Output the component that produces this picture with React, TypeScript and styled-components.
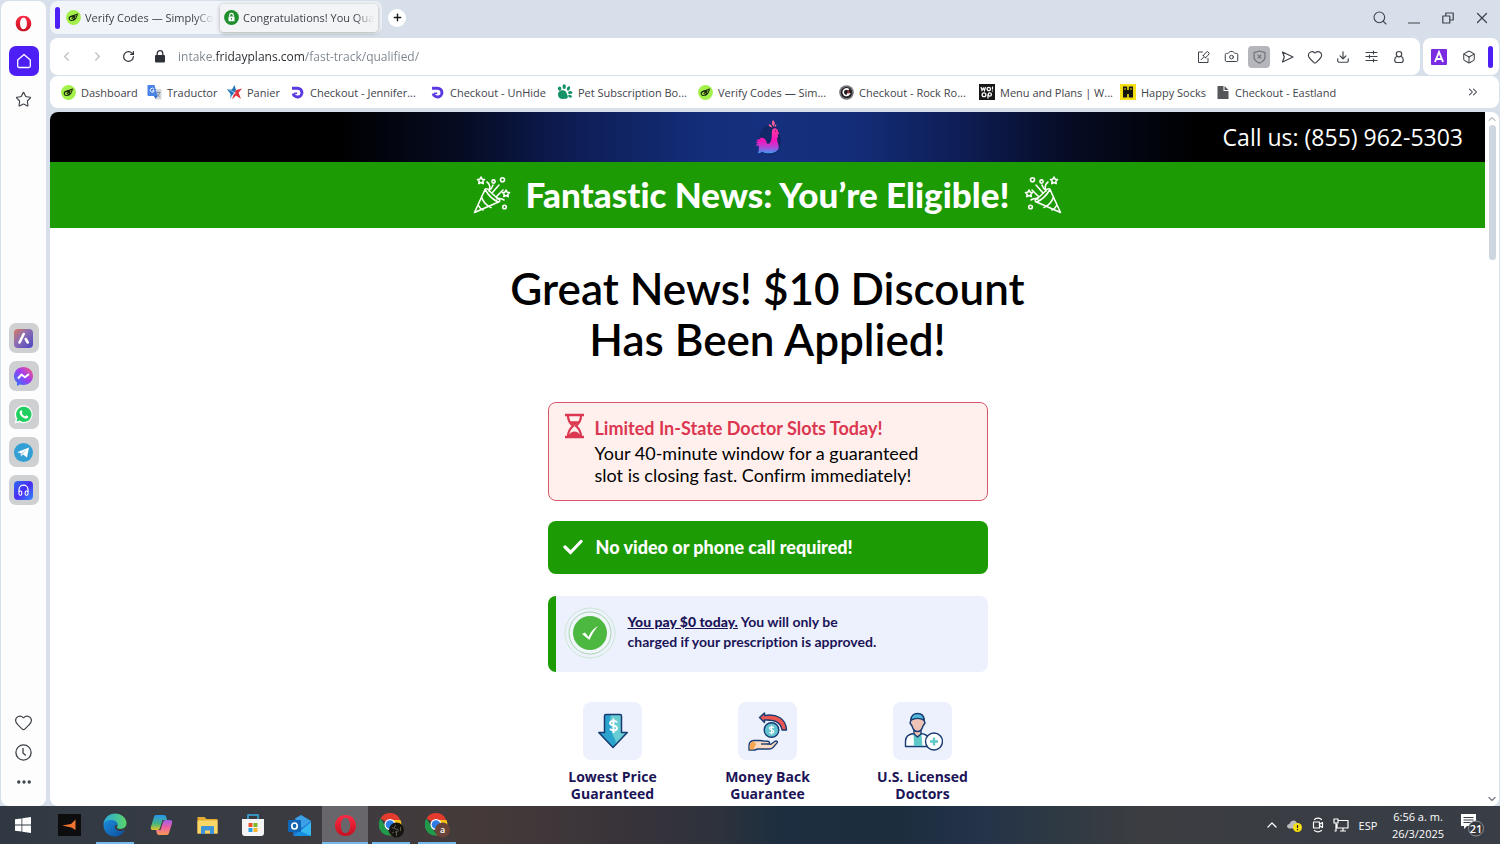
import React from "react";
import styled, { createGlobalStyle } from "styled-components";
import {
  Search, X, Heart, Download, Box, ChevronLeft, ChevronRight, ChevronsRight,
  RotateCw, Camera, Star, Ellipsis, Plus, ChevronUp, ChevronDown,
} from "lucide-react";

const ui = `"Open Sans", "Noto Sans", sans-serif`;
const brand = `Lato, "Open Sans", sans-serif`;

const GlobalStyle = createGlobalStyle`
  *, *::before, *::after { box-sizing: border-box; }
  body { margin: 0; background: #d7e0ea; font-family: ${ui}; }
  button { border: 0; padding: 0; background: none; font: inherit; color: inherit; }
  svg { display: block; flex: none; }
`;

const Desktop = styled.div`
  display: flex;
  flex-direction: column;
  height: 100vh;
  min-height: 480px;
  overflow: hidden;
  color: #3d4249;
`;
const Browser = styled.div`
  flex: 1;
  min-height: 0;
  display: flex;
  gap: 4px;
  padding: 1px 1px 0;
`;

/* Sidebar */
const Sidebar = styled.nav`
  width: 45px;
  flex: none;
  display: flex;
  flex-direction: column;
  align-items: center;
  padding: 7px 0 9px;
  background: #fdfdfe;
  border-radius: 8px;
`;
const SideButton = styled.button<{ $home?: boolean }>`
  display: flex;
  align-items: center;
  justify-content: center;
  width: 30px;
  height: 30px;
  border-radius: 7px;
  margin-bottom: 8px;
  color: ${(p) => (p.$home ? "#fff" : "#3d4249")};
  background: ${(p) => (p.$home ? "#4d1ff5" : "none")};
`;
const AppList = styled.div`
  display: flex;
  flex-direction: column;
  gap: 8px;
  margin-top: 201px;
`;
const AppButton = styled.button`
  display: flex;
  align-items: center;
  justify-content: center;
  width: 30px;
  height: 30px;
  border-radius: 7px;
  background: #cfd0d2;
`;
const SideFooter = styled.div`
  display: flex;
  flex-direction: column;
  margin-top: auto;
`;
const FooterButton = styled.button`
  display: flex;
  align-items: center;
  justify-content: center;
  width: 30px;
  height: 30px;
`;

/* Chrome */
const Main = styled.div`
  flex: 1;
  min-width: 0;
  display: flex;
  flex-direction: column;
`;
const TabBar = styled.div`
  display: flex;
  align-items: center;
  height: 33px;
  margin-bottom: 4px;
`;
const TabGroup = styled.div`
  display: flex;
  align-items: center;
  width: 332px;
  height: 33px;
  padding: 0 4px 0 5px;
  background: #f1f4f8;
  border-radius: 8px;
`;
const Marker = styled.span`
  width: 5px;
  height: 22px;
  border-radius: 3px;
  background: #4d1ff5;
`;
const Tab = styled.button<{ $active?: boolean }>`
  display: flex;
  align-items: center;
  gap: 4px;
  height: 28px;
  flex: ${(p) => (p.$active ? "0 0 158px" : 1)};
  min-width: 0;
  margin-left: 2px;
  padding: 0 4px;
  border-radius: 4px;
  font-size: 11px;
  background: ${(p) => (p.$active ? "#f3f4f6" : "none")};
  box-shadow: ${(p) => (p.$active ? "0 1px 4px rgba(0,0,0,.3)" : "none")};
`;
const TabTitle = styled.span`
  flex: 1;
  overflow: hidden;
  white-space: nowrap;
  text-align: left;
  mask-image: linear-gradient(90deg, #000 85%, transparent);
`;
const NewTab = styled.button`
  display: flex;
  align-items: center;
  justify-content: center;
  width: 18px;
  height: 18px;
  margin-left: 6px;
  border-radius: 50%;
  background: #fff;
  color: #16181b;
`;
const WindowControls = styled.div`
  display: flex;
  margin-left: auto;
`;
const WindowButton = styled.button`
  display: flex;
  align-items: center;
  justify-content: center;
  width: 34px;
  height: 33px;
`;
const AddressRow = styled.div`
  display: flex;
  gap: 3px;
  height: 37px;
  margin-bottom: 1px;
`;
const Panel = styled.div<{ $grow?: boolean }>`
  display: flex;
  align-items: center;
  flex: ${(p) => (p.$grow ? 1 : "none")};
  min-width: 0;
  padding: ${(p) => (p.$grow ? "0 7px 0 1px" : "0 6px 0 1px")};
  background: #fff;
  border-radius: 8px;
`;
const NavButton = styled.button<{ $faded?: boolean }>`
  display: flex;
  align-items: center;
  justify-content: center;
  width: 31px;
  height: 30px;
  color: ${(p) => (p.$faded ? "#b9bcc1" : "#2e3238")};
`;
const UrlField = styled.input`
  flex: 1;
  min-width: 0;
  height: 30px;
  margin-left: 3px;
  padding: 0;
  border: 0;
  outline: 0;
  font: 12px/30px ${ui};
  color: transparent;
  background: linear-gradient(90deg, #7b838c 0 37px, #24282d 37px 127px, #7b838c 127px);
  background-clip: text;
`;
const ToolButton = styled.button<{ $on?: boolean }>`
  display: flex;
  align-items: center;
  justify-content: center;
  width: 22px;
  height: 22px;
  margin: 0 3px;
  border-radius: 4px;
  background: ${(p) => (p.$on ? "#b4b6bb" : "none")};
`;
const ExtButton = styled.button`
  display: flex;
  align-items: center;
  justify-content: center;
  width: 30px;
  height: 30px;
`;
const ExtMarker = styled(Marker)`
  margin-left: 4px;
`;
const Bookmarks = styled.nav`
  display: flex;
  align-items: center;
  height: 32px;
  margin-bottom: 4px;
  padding: 0 19px 0 11px;
  background: #fff;
  border-radius: 8px;
`;
const Bookmark = styled.a<{ $w: number }>`
  display: flex;
  align-items: center;
  gap: 5px;
  width: ${(p) => p.$w}px;
  flex: none;
  font-size: 11px;
  color: #3f444a;
  text-decoration: none;
  white-space: nowrap;
`;
const More = styled.button`
  margin-left: auto;
`;

/* Page */
const Viewport = styled.div`
  flex: 1;
  min-height: 0;
  display: flex;
  border-radius: 8px;
  overflow: hidden;
  background: #fff;
`;
const Page = styled.main`
  flex: 1;
  min-width: 0;
  overflow: hidden;
  color: #000;
  font-family: ${brand};
  font-variant-ligatures: none;
`;
const ScrollTrack = styled.div`
  display: flex;
  flex-direction: column;
  align-items: center;
  width: 14px;
  padding: 1px 0;
  color: #85898f;
`;
const ScrollThumb = styled.div`
  width: 7px;
  height: 135px;
  border-radius: 4px;
  background: #ced6e0;
  margin-bottom: auto;
`;
const Hero = styled.header`
  display: grid;
  grid-template-columns: 1fr auto 1fr;
  align-items: center;
  height: 50px;
  padding: 0 22px;
  background: linear-gradient(90deg, #000 20%, #060c24 29%, #0d1c52 36%, #142d79 45%, #15307e 50%, #142d79 56%, #0d1c52 64%, #060c24 71%, #000 80%);
`;
const Phone = styled.a`
  justify-self: end;
  font: 23px/32px ${ui};
  color: #fff;
  text-decoration: none;
`;
const Banner = styled.div`
  display: flex;
  align-items: center;
  justify-content: center;
  gap: 15px;
  height: 66px;
  background: #1c9b04;
  color: #fff;
`;
const BannerTitle = styled.h2`
  margin: 0;
  padding-bottom: 3px;
  font-size: 35px;
  line-height: 48px;
  font-weight: 900;
`;
const Headline = styled.h1`
  margin: 35px 0 37px;
  font-size: 44px;
  line-height: 51px;
  font-weight: 600;
  text-align: center;
`;
const Stack = styled.div`
  width: 440px;
  max-width: 100%;
  margin: 0 auto;
  display: flex;
  flex-direction: column;
`;
const Alert = styled.section`
  display: flex;
  gap: 10px;
  height: 99px;
  padding: 10px 15px;
  border: 1px solid #d8566c;
  border-radius: 8px;
  background: #fff0ee;
`;
const AlertTitle = styled.h3`
  margin: 3px 0 2px;
  font-size: 18px;
  line-height: 24px;
  font-weight: 700;
  color: #dc3750;
`;
const AlertText = styled.p`
  margin: 0;
  font-size: 18px;
  line-height: 22px;
`;
const Required = styled.section`
  display: flex;
  align-items: center;
  gap: 13px;
  height: 53px;
  margin-top: 20px;
  padding: 0 15px 2px;
  border-radius: 8px;
  background: #1c9b04;
  color: #fff;
  font-size: 18px;
  font-weight: 900;
`;
const PayNote = styled.section`
  display: flex;
  align-items: center;
  gap: 12px;
  height: 76px;
  margin-top: 22px;
  padding: 0 8px 2px;
  border-left: 8px solid #1c9b04;
  border-radius: 8px;
  background: #edf1fe;
`;
const PayText = styled.p`
  margin: 0;
  padding-bottom: 2px;
  font-size: 14px;
  line-height: 20px;
  font-weight: 700;
  color: #1b1457;
`;
const PayStrong = styled.strong`
  font-weight: 900;
  text-decoration: underline;
`;
const Features = styled.ul`
  display: flex;
  justify-content: center;
  list-style: none;
  margin: 30px 0 0;
  padding: 0;
`;
const Feature = styled.li`
  display: flex;
  flex-direction: column;
  align-items: center;
  flex: none;
  width: 155px;
  text-align: center;
  font: 700 14px/17px ${ui};
  color: #1b1457;
`;
const FeatureTile = styled.div`
  display: flex;
  align-items: center;
  justify-content: center;
  width: 59px;
  height: 58px;
  margin-bottom: 8px;
  border-radius: 8px;
  background: #edf1fe;
`;

/* Taskbar */
const Taskbar = styled.footer`
  display: flex;
  flex: none;
  height: 38px;
  background: linear-gradient(90deg, #303943 0%, #363b43 12%, #3c3b40 22%, #453a39 32%, #38333a 42%, #2d323c 48%, #1c2e3f 52%, #1c2e3e 60%, #24324a 65%, #2d3943 70%, #3b3d41 76%, #383d46 100%);
  color: #fff;
`;
const TaskButton = styled.button<{ $open?: boolean; $active?: boolean }>`
  display: flex;
  align-items: center;
  justify-content: center;
  width: 46px;
  height: 38px;
  background:
    linear-gradient(#76b9ed, #76b9ed) center bottom / ${(p) => (p.$active ? "46px" : p.$open ? "38px" : "0")} 2px no-repeat,
    ${(p) => (p.$active ? "#68666b" : "transparent")};
`;
const Tray = styled.div`
  display: flex;
  align-items: center;
  margin-left: auto;
  padding-right: 14px;
  font-size: 11px;
`;
const TrayButton = styled.button`
  display: flex;
  align-items: center;
  justify-content: center;
  width: 23px;
  height: 38px;
`;
const Language = styled.button`
  width: 32px;
  font-size: 11px;
`;
const Clock = styled.time`
  width: 68px;
  line-height: 17px;
  text-align: center;
`;
const NoticeButton = styled.button`
  display: flex;
  width: 34px;
  justify-content: flex-end;
`;

/* Drawings */
const OperaO = ({ size }: { size: number }) => (
  <svg width={size} height={size} viewBox="0 0 24 24">
    <defs>
      <linearGradient id="opera" x1="0" y1="0" x2="0" y2="1">
        <stop offset="0" stopColor="#ff2b45" />
        <stop offset="1" stopColor="#c4101f" />
      </linearGradient>
    </defs>
    <path fill="url(#opera)" fillRule="evenodd" d="M12 1C5.500 1 1 5.900 1 12s4.500 11 11 11 11-4.900 11-11S18.500 1 12 1Zm0 3c3.200 0 4.800 3.600 4.800 8s-1.600 8-4.800 8-4.800-3.600-4.800-8S8.800 4 12 4Z" />
  </svg>
);
const SimplyIcon = () => (
  <svg width="15" height="15" viewBox="0 0 15 15">
    <circle cx="7.500" cy="7.500" r="7.400" fill="#a4f04a" />
    <g fill="none" stroke="#18250c" strokeWidth="1.100" strokeLinecap="round">
      <ellipse cx="5.800" cy="8.300" rx="2.600" ry="2" transform="rotate(-18 5.800 8.300)" />
      <path d="M5.500 6.200 11.800 4M6 8.500 9 6M7.500 10.200c1.800-.8 3-2.700 3.600-4.900" />
    </g>
  </svg>
);
const LockBadge = () => (
  <svg width="15" height="15" viewBox="0 0 15 15">
    <circle cx="7.500" cy="7.500" r="7.400" fill="#1f8f2e" />
    <rect x="4.500" y="6.500" width="6" height="4.800" rx=".6" fill="#fff" />
    <path d="M5.700 6.600V5.200a1.800 1.800 0 0 1 3.600 0v1.400" fill="none" stroke="#fff" strokeWidth="1.200" />
    <path d="M7.500 8v1.600" stroke="#1f8f2e" />
  </svg>
);
const TranslateIcon = () => (
  <svg width="15" height="15" viewBox="0 0 15 15">
    <path d="M6 4h8.500v10.500H9z" fill="#d5d8dc" />
    <path d="M9 7.500h4.500M11.200 6.500v1M12.800 7.500c-.4 1.900-1.600 3.400-3 4.200M9.800 8.800c.6 1.300 1.600 2.200 2.900 2.900" stroke="#70808f" fill="none" strokeWidth=".8" />
    <path d="M.5 0h7l3 11H1.300C.8 11 .5 10.600.5 10z" fill="#4a83e8" />
    <path d="M7 4.200a2 2 0 1 0 .2 1.600H5.200" stroke="#fff" fill="none" />
    <path d="M7 11h3.400L8.500 14z" fill="#3460c4" />
  </svg>
);
const PanierIcon = () => (
  <svg width="15" height="15" viewBox="0 0 15 15">
    <path d="M7.500 0 9 5 5.800 9.800 3 14l.6-5L0 4.200l5 .3z" fill="#1d75b8" />
    <path d="M9.200 5 15 3.500l-3.400 4.300L14 14l-5-3.500L5 14.500l2-6z" fill="#e2323c" />
    <path d="M.5 3.500 9 8.500M3 12.500 8 8" stroke="#fff" strokeWidth=".6" />
  </svg>
);
const LoopIcon = () => (
  <svg width="15" height="15" viewBox="0 0 15 15">
    <path d="M2 3.200h5.500a4.400 4.400 0 1 1-4.300 5.200" fill="none" stroke="#5b38e0" strokeWidth="3" />
    <path d="M4.200 8.300h3" stroke="#5b38e0" strokeWidth="1.600" />
  </svg>
);
const PawIcon = () => (
  <svg width="16" height="16" viewBox="0 0 16 16" fill="#179267">
    <path d="M1 11c-.3-3.200 3-5.400 6-4.400 2.500.8 2.600 3 3.600 4.800 1 2.200-.8 4-3.300 3.300-2.700.8-6-.3-6.300-3.700Z" />
    <ellipse cx="2.600" cy="4.600" rx="1.700" ry="2.200" />
    <ellipse cx="7.200" cy="2.700" rx="1.700" ry="2.400" />
    <ellipse cx="11.500" cy="4.400" rx="1.500" ry="2.300" transform="rotate(25 11.500 4.400)" />
    <ellipse cx="13.200" cy="8.500" rx="2.200" ry="1.500" />
    <ellipse cx="13" cy="12.300" rx="2" ry="1.300" transform="rotate(20 13 12.300)" />
  </svg>
);
const RockIcon = () => (
  <svg width="15" height="15" viewBox="0 0 15 15">
    <circle cx="7.500" cy="7.500" r="7.300" fill="#77727a" />
    <circle cx="7.500" cy="7.500" r="5.600" fill="#211f24" />
    <path d="M9.800 4.800a3.300 3.300 0 1 0 .4 4.300H8" fill="none" stroke="#fff" strokeWidth="1.600" />
    <path d="m8 5 3 2.500-2 1z" fill="#c4343a" />
  </svg>
);
const WoopIcon = () => (
  <svg width="16" height="16" viewBox="0 0 16 16">
    <rect width="16" height="16" fill="#161616" />
    <path d="m2 3 1 3.500 1.300-2.500 1.200 2.500 1-3.500M13.500 2.500v3M13.500 6.500v1" stroke="#fff" fill="none" strokeWidth="1.200" />
    <g fill="none" stroke="#fff" strokeWidth="1.300"><circle cx="9.800" cy="5" r="1.700" /><circle cx="5" cy="10.800" r="1.900" /><circle cx="10.800" cy="10.500" r="1.600" /><path d="M9 10.500v4" /></g>
  </svg>
);
const HappyIcon = () => (
  <svg width="16" height="16" viewBox="0 0 16 16">
    <rect width="16" height="16" fill="#f3de17" />
    <path d="M3 2.500h4.200V6h1.600V2.500H13v11H8.800V10H7.200v3.500H3z" fill="#14130a" />
    <path d="M5 4v2M11 4v2" stroke="#f3de17" />
  </svg>
);
const FileIcon = () => (
  <svg width="14" height="15" viewBox="0 0 14 15" fill="#55575b">
    <path d="M1.500 1h6v5h5v8h-11zM8.500 1l4 4h-4z" />
  </svg>
);
const Rooster = () => (
  <svg width="28" height="38" viewBox="0 0 28 38">
    <defs>
      <linearGradient id="hen" x1="0" y1="0" x2="0" y2="1">
        <stop offset="0" stopColor="#ff3fa0" />
        <stop offset=".5" stopColor="#f414bb" />
        <stop offset=".75" stopColor="#b545d8" />
        <stop offset="1" stopColor="#3b9bf5" />
      </linearGradient>
    </defs>
    <ellipse cx="16" cy="22" rx="11" ry="15" fill="#0a1740" opacity=".35" />
    <g transform="translate(2 2)">
      <path fill="url(#hen)" d="M16 10.500c.6-2.600 4-3.300 5.500-.8.500 1 .6 2 1.900 4.300l-1.700.2.500 3.300-1-.3c-.2 2.500.2 4.600 1.100 7.200 1.800 5.200-2.500 8.900-9 8.900-3 0-5.800-.7-7.300-1.900-.8.900-2.200 1.600-4.200 1.700 1.600-2.600.9-5.200 1-7.600-1-.2-1.900.1-2.700.8.100-1.500.7-2.500 1.800-3-.8-.3-1.500-.2-2.300.1.700-1.500 1.800-2.300 3.200-2.400-.6-.4-1.400-.5-2.500-.2 1.200-1.400 2.700-1.800 4.300-1.300 0-.6-.4-1.200-1.300-1.700 4-.8 6.700 1.400 7.200 4.200.4 2 1.500 2.300 3 1.300 2.800-2 2-8.500 2.500-12.800Z" />
      <path fill="#ff5f96" d="M16.300 7.500c-2.500-.3-3.700-1.500-3.600-3.200 2 .2 3.300 1.300 3.600 3.200Zm1.200-.8C15.500 4.500 15.300 2 17 0c2.200 2 2.400 4.500.5 6.700Zm1.300.5c-.2-1.500.1-2.300 1.200-3.200.7 1.300.4 2.400-1.200 3.200Z" />
      <circle cx="19.500" cy="11" r=".7" fill="#7a1360" />
    </g>
  </svg>
);
const Popper = ({ flip }: { flip?: boolean }) => (
  <svg width="38" height="38" viewBox="0 0 38 38" fill="none" stroke="#fff" strokeWidth="1.600" strokeLinejoin="round" strokeLinecap="round">
    <g transform={flip ? "matrix(-1 0 0 1 38 0)" : undefined}>
      <path d="M1.500 36.500 12 13.500c3 5 8 10.500 13.500 12.500ZM8.500 21c1.500 4.500 5 8.500 9.500 10.500M5 29c1.200 2.300 2.800 4 5 5" />
      <path d="M12 13.500c1.400-2 4 .3 5.500 2.500l6 5.500c3 1.500 4.500 3.500 2 4.500M16 15c1.500-3 1-7-2-9M19 17l7-8M23 21l7-7M24 23c3-1.500 6 .5 7 1M18 13l2-4" />
      <path d="m8 1 1.100 2.200 2.400.3-1.700 1.700.4 2.400L8 6.500 5.800 7.600l.4-2.400-1.700-1.700 2.400-.3zM33 14l1.100 2.200 2.400.3-1.700 1.700.4 2.400-2.200-1.100-2.200 1.100.4-2.400-1.700-1.700 2.400-.3z" />
      <circle cx="20.500" cy="5.500" r="1.600" /><circle cx="29.500" cy="3.800" r="2" /><circle cx="31.500" cy="31" r="1.800" />
    </g>
  </svg>
);
const Hourglass = () => (
  <svg width="21" height="26" viewBox="0 0 21 26" fill="#dc3750">
    <path d="M1 .8h19v2.400H1zM1 22.800h19v2.400H1z" />
    <path d="M4 3c0 5 2 7.300 5 10-3 2.700-5 5-5 10M17 3c0 5-2 7.300-5 10 3 2.700 5 5 5 10" fill="none" stroke="#dc3750" strokeWidth="2.200" />
    <path d="M5.800 8.300h9.400L10.500 13zM4.500 23c1-3 3.500-4.600 6-4.600s5 1.600 6 4.600z" />
  </svg>
);
const Seal = () => (
  <svg width="52" height="52" viewBox="0 0 52 52" fill="none">
    <circle cx="26" cy="26" r="25" stroke="#cbe8d1" />
    <circle cx="26" cy="26" r="21" fill="#f0f6fb" stroke="#a9d5ae" />
    <circle cx="26" cy="26" r="17" fill="#4cb840" />
    <path d="m18 27 3-1.500 3.500 4.500c2-5 5-8.500 9.500-11-3.500 4-6.500 9-8.500 14z" fill="#fff" />
  </svg>
);
const PriceIcon = () => (
  <svg width="32" height="36" viewBox="0 0 32 36">
    <path d="M7.500 1.500h17v18H31L16 34.500 1 19.500h6.500z" fill="#2ba3cf" />
    <path d="M14 1.500h10.500v18H31l-13 13c3-6-3-8-3-14 0-5-3-9-1-17z" fill="#68cdd2" />
    <path d="M7.500 3q0-1.500 1.500-1.500h14q1.500 0 1.500 1.500v16.500h5.700L16 34.500 1.800 19.500h5.700z" fill="none" stroke="#173b72" strokeWidth="1.500" strokeLinejoin="round" />
    <path d="M20 9.500c-1-2.200-7-2.400-7 .8 0 3.300 7 1.500 7 4.700 0 3.300-6 3.200-7 .7M16.500 5.500v14.500" stroke="#fff" strokeWidth="1.800" fill="none" />
  </svg>
);
const RefundIcon = () => (
  <svg width="40" height="39" viewBox="0 0 40 39" stroke="#173b72" strokeWidth="1.400" strokeLinejoin="round">
    <path d="m11.500 5.500 5-4.500v2.500C28 1.500 38 6 38.500 18H34C33 10 26 7.500 16.500 8v2.500z" fill="#ea5651" />
    <circle cx="23.500" cy="18" r="7.300" fill="#62c5cf" />
    <path d="M25.800 15.800c-.8-1.300-4.300-1.400-4.300.5s4.300 1.300 4.300 3.300-3.700 1.900-4.400.4M23.600 13.500v9" fill="none" stroke="#fff" strokeWidth="1.300" />
    <path d="M1 38v-4c0-3 2-5.300 5-5.500h6c2 0 2.500 0 4 .5l4 .3c2 .3 2 2.400 0 2.700l3 .3 4-3c1.500-.8 3 .2 2 1.600L25 35.500c-1 1-2 1.500-4 1.500H9.500L7 38z" fill="#fbdcc2" />
    <path d="M1.700 37.400v-3.600c.3-2.700 2-4.300 4.300-4.600l2 3-2.500 5.200z" fill="#f7a64f" stroke="none" />
    <path d="M13 32h7" fill="none" />
  </svg>
);
const DoctorIcon = () => (
  <svg width="40" height="39" viewBox="0 0 40 39" stroke="#173b72" strokeWidth="1.400" strokeLinejoin="round">
    <g transform="translate(1 0)">
      <path d="M1.500 34.500V29c0-4.500 4-7 9-7.500h6c5 .5 8 2.500 8.500 6v7z" fill="#fff" />
      <path d="M9.500 22h8l1 12h-8.500z" fill="#5ec8c8" stroke="none" />
      <path d="M10 18h7v4l-3.500 3-3.500-3z" fill="#eec2b4" />
      <path d="M7 8c0-3 2.500-6 6.500-6S20 5 20 8l1 3-2 3c-1 3.500-3 5.500-5.500 5.500S9 17.500 8 14l-2-3z" fill="#eec2b4" />
      <path d="M7 8c0-4.500 3-6.500 6.500-6.500S20 3.500 20 8c-4-2-9-2-13 0Z" fill="#52b7d9" />
      <circle cx="30" cy="29.500" r="8.500" fill="#fff" />
      <path d="M30 25.500v8M26 29.500h8" stroke="#5ec8c8" strokeWidth="2.400" />
    </g>
  </svg>
);
const HomeIcon = () => (
  <svg width="16" height="16" viewBox="0 0 16 16" fill="none" stroke="#fff" strokeWidth="1.300" strokeLinejoin="round">
    <path d="M1.700 7 8 1.400 14.300 7v6q0 1.500-1.500 1.500H3.200q-1.500 0-1.500-1.500z" />
  </svg>
);
const AriaIcon = () => (
  <svg width="19" height="19" viewBox="0 0 19 19">
    <defs>
      <linearGradient id="aria" x1="0" y1="0" x2="1" y2="1">
        <stop offset="0" stopColor="#d9775a" /><stop offset=".4" stopColor="#8f6fb0" /><stop offset="1" stopColor="#4b45c6" />
      </linearGradient>
    </defs>
    <rect width="19" height="19" rx="4" fill="url(#aria)" />
    <path d="M5.500 13.500 9.700 5M11.700 10l2.100 3.500" stroke="#fff" strokeWidth="2.600" strokeLinecap="round" />
  </svg>
);
const MessengerIcon = () => (
  <svg width="19" height="19" viewBox="0 0 19 19">
    <defs>
      <linearGradient id="msg" x1="0" y1="1" x2="1" y2="0">
        <stop offset="0" stopColor="#1f7cff" /><stop offset=".55" stopColor="#a13bf0" /><stop offset="1" stopColor="#ff5f73" />
      </linearGradient>
    </defs>
    <path d="M9.500 0C4.200 0 0 3.900 0 9c0 2.700 1.200 5 3 6.600V19l2.900-1.600c1.100.3 2.300.5 3.600.5 5.300 0 9.500-3.900 9.500-9S14.800 0 9.500 0Z" fill="url(#msg)" />
    <path d="m4 11.500 3.500-4 3.500 2.700L15 7" fill="none" stroke="#fff" strokeWidth="2" />
  </svg>
);
const WhatsappIcon = () => (
  <svg width="19" height="19" viewBox="0 0 19 19">
    <path d="M9.700.3A9 9 0 0 0 1.900 14L.5 18.500 5.200 17.200A9 9 0 1 0 9.700.3Z" fill="#fff" />
    <path d="M9.700 1.800a7.600 7.600 0 0 0-6.300 11.800l-.8 2.800 2.900-.8A7.600 7.600 0 1 0 9.700 1.800Z" fill="#20cf5f" />
    <path d="M6.800 5.500c.6-.3 1-.1 1.300.7.500 1.300.4 1.300-.3 2.100.8 1.600 1.800 2.500 3.300 3.100.8-1 .9-1.200 1.600-.8 1.700.8 1.700.8 1.400 1.700-.4 1.100-1.900 1.500-3.100 1.100-3-.9-4.900-3-5.400-5.100-.3-1.200.2-2.300 1.200-2.800Z" fill="#fff" />
  </svg>
);
const TelegramIcon = () => (
  <svg width="19" height="19" viewBox="0 0 19 19">
    <circle cx="9.500" cy="9.500" r="9.500" fill="#329fd4" />
    <path d="m3 9.200 12-4.700-2 10-4-2.900-2 2-.5-3.500z" fill="#fff" />
    <path d="m7 10.200 6-4-4.300 5.200L7 13.400z" fill="#c3dcec" />
  </svg>
);
const PlayerIcon = () => (
  <svg width="19" height="19" viewBox="0 0 19 19">
    <defs>
      <linearGradient id="play" x1="0" y1="0" x2="1" y2="1">
        <stop offset="0" stopColor="#2b6df2" /><stop offset=".5" stopColor="#4a2df4" /><stop offset="1" stopColor="#318bff" />
      </linearGradient>
    </defs>
    <rect width="19" height="19" rx="4" fill="url(#play)" />
    <path d="M5 11V8.700a4.500 4.500 0 0 1 9 0V11" fill="none" stroke="#fff" strokeWidth="1.200" />
    <g fill="none" stroke="#fff" strokeWidth="1.100"><rect x="5" y="10" width="2.800" height="4.300" rx="1.200" /><rect x="11.200" y="10" width="2.800" height="4.300" rx="1.200" /></g>
  </svg>
);
const HistoryIcon = () => (
  <svg width="17" height="17" viewBox="0 0 17 17" fill="none" stroke="currentColor" strokeWidth="1.300">
    <circle cx="8.500" cy="8.500" r="7.600" /><path d="M8 4v5l2.800 2.600" />
  </svg>
);
const Padlock = () => (
  <svg width="12" height="13" viewBox="0 0 12 13" fill="#2e3238">
    <rect x="1" y="5" width="10" height="7.500" rx="1" /><path d="M3.200 5.500V3.500a2.800 2.800 0 0 1 5.600 0v2" fill="none" stroke="#2e3238" strokeWidth="1.300" />
  </svg>
);
const line = { fill: "none", stroke: "currentColor", strokeWidth: 1.2, strokeLinejoin: "round" as const, strokeLinecap: "round" as const };
const NoteIcon = () => (
  <svg width="13" height="14" viewBox="0 0 13 14" {...line} strokeWidth={1}><path d="M5.500 2H1.500v10.500H11V8.500M4 9.800l2.500-2.500M5.800 5.200l3 3M6.300 5.700l2-2.600L10.500 1.500 12.300 3.300 10.800 5.700 8.300 7.700" /></svg>
);
const ShieldIcon = () => (
  <svg width="13" height="14" viewBox="0 0 13 14" {...line} stroke="#70737a"><path d="M6.500 1 12 2.600v4.200c0 3-2.200 5-5.500 6.300C3.200 11.800 1 9.800 1 6.800V2.600zM5 5.200l3 3M8 5.200l-3 3" /></svg>
);
const FlowIcon = () => (
  <svg width="13" height="14" viewBox="0 0 13 14" {...line}><path d="M1.500 2 12 7 1.500 12l1.800-5z" /></svg>
);
const TuneIcon = () => (
  <svg width="13" height="13" viewBox="0 0 13 13" {...line}><path d="M1 2.500h11M1 6.500h11M1 10.500h11M8.500 1.200v2.600M4.500 5.200v2.600M8.500 9.200v2.600" /></svg>
);
const PersonIcon = () => (
  <svg width="12" height="14" viewBox="0 0 12 14" {...line}><circle cx="6" cy="4.200" r="2.700" /><path d="M4 6.200C2.600 6.900 1.700 8.300 1.700 10q0 2.500 2.300 2.500h4q2.300 0 2.300-2.500C10.300 8.300 9.400 6.900 8 6.200" /></svg>
);
const RestoreIcon = () => (
  <svg width="12" height="12" viewBox="0 0 12 12" {...line}><path d="M.8 4h7v7h-7zM3.800 4V1h7.400v7H8" /></svg>
);
const ExtA = () => (
  <svg width="16" height="16" viewBox="0 0 16 16"><rect width="16" height="16" rx="1" fill="#7b2be0" /><path d="m4 13 4-10 4 10M5.500 10h5" stroke="#fff" strokeWidth="1.900" fill="none" /></svg>
);

const WindowsLogo = () => (
  <svg width="16" height="16" viewBox="0 0 16 16" fill="#fff"><path d="M0 2.300 6.500 1.400v6.200H0zM7.300 1.300 16 0v7.600H7.300zM0 8.400h6.500v6.200L0 13.700zM7.300 8.400H16V16l-8.700-1.300z" /></svg>
);
const ArrowApp = () => (
  <svg width="23" height="22" viewBox="0 0 23 22"><rect width="23" height="22" fill="#0d0d0e" /><path d="m4 11.500 9-1.500 4.500-4.500v10.500L13.500 13.500z" fill="#ee7430" /></svg>
);
const EdgeIcon = () => (
  <svg width="24" height="24" viewBox="0 0 24 24">
    <defs>
      <linearGradient id="edge1" x1="0" y1="0" x2="1" y2="0"><stop offset="0" stopColor="#2aa8e0" /><stop offset="1" stopColor="#59d568" /></linearGradient>
      <linearGradient id="edge2" x1="0" y1="0" x2="1" y2="1"><stop offset="0" stopColor="#1b8fdc" /><stop offset="1" stopColor="#0d4b9c" /></linearGradient>
    </defs>
    <path d="M.5 11C1.200 5 6 .5 12 .5 18.500.5 23.500 5 23.500 10.300c0 3.500-2.700 5.700-6 5.700-2.500 0-4-1-3.500-2 1.600-2.500-.4-6-4.500-6S2 9 .5 11Z" fill="url(#edge1)" />
    <path d="M.5 11C2 7.800 5.500 6.500 9.500 7c3.300.3 5.500 3 5 6-.2-1.500-2-1.500-2.500 0-.7 2.500 1.500 5 5 5 2 0 3.400-.3 4.800-1-2 4-5.500 6.500-9.800 6.500C5 23.500 0 18 .5 11Z" fill="url(#edge2)" />
  </svg>
);
const CopilotIcon = () => (
  <svg width="23" height="22" viewBox="0 0 23 22">
    <defs>
      <linearGradient id="cp1" x1="0" y1="0" x2="0" y2="1"><stop offset="0" stopColor="#2794ef" /><stop offset=".6" stopColor="#49b779" /><stop offset="1" stopColor="#e8c62c" /></linearGradient>
      <linearGradient id="cp2" x1="0" y1="0" x2="0" y2="1"><stop offset="0" stopColor="#a05be8" /><stop offset=".5" stopColor="#ee63a0" /><stop offset="1" stopColor="#f89b52" /></linearGradient>
    </defs>
    <path d="M6 1h8q2 0 2.500 3l.5 2h-4.500L10 14q-.7 2-2.500 2H3Q0 16 1 12.500L4 3Q4.500 1 6 1Z" fill="url(#cp1)" />
    <path d="M17 21H9q-2 0-2.500-3L6 16h4.500L13 8q.7-2 2.500-2H20q3 0 2 3.500L19 19q-.5 2-2 2Z" fill="url(#cp2)" />
  </svg>
);
const FolderIcon = () => (
  <svg width="21" height="18" viewBox="0 0 21 18"><path d="M.5 1h7l2 2h11v14.500H.5z" fill="#e5ab33" /><path d="M.5 4.500h20v13H.5z" fill="#fbd768" /><path d="M4 18v-7q0-1 1-1h11q1 0 1 1v7h-4v-3.500H8V18z" fill="#3f93d8" /></svg>
);
const StoreIcon = () => (
  <svg width="22" height="22" viewBox="0 0 22 22"><path d="M6 6V1h10v5" fill="none" stroke="#39aee6" strokeWidth="1.500" /><path d="M0 5h22v14q0 3-3 3H3q-3 0-3-3z" fill="#f4f4f5" /><path d="M6.500 9H10.500v4h-4z" fill="#ec5228" /><path d="M11.500 9h4v4h-4z" fill="#7cb928" /><path d="M6.500 14h4v4h-4z" fill="#26a0e8" /><path d="M11.500 14h4v4h-4z" fill="#f9b72b" /></svg>
);
const OutlookIcon = () => (
  <svg width="23" height="21" viewBox="0 0 23 21"><path d="M5 6 13 0l10 6v14q0 1-1 1H6q-1 0-1-1z" fill="#1d6fc6" /><path d="m7 3.500 6-3.500 10 6-9 7z" fill="#3ba0e6" /><path d="M23 7v13q0 1-1 1H6z" fill="#37b7ef" /><path d="m12 16 11 5H6z" fill="#1490df" /><rect y="5" width="13" height="12" rx="1" fill="#1065b5" /><ellipse cx="6.500" cy="11" rx="2.700" ry="3" fill="none" stroke="#fff" strokeWidth="1.700" /></svg>
);
const ChromeIcon = ({ badge }: { badge: "a" | "photo" }) => (
  <svg width="25" height="25" viewBox="0 0 25 25">
    <path d="M11 11 1.500 5.500A11 11 0 0 1 21 6.300L20 7H11z" fill="#e33b2e" />
    <path d="M11 11V7h10.500A11 11 0 0 1 11.500 22.500z" fill="#fbc116" />
    <path d="M1.500 5.500 8 16l4 6.500A11 11 0 0 1 1.500 5.500Z" fill="#219a4c" />
    <circle cx="11" cy="11.500" r="5.500" fill="#fff" />
    <circle cx="11" cy="11.500" r="4.300" fill="#2f7de8" />
    <circle cx="17.500" cy="17" r="7.500" fill={badge === "a" ? "#6a4438" : "#15140f"} />
    {badge === "a" ? (
      <text x="17.500" y="20" fontSize="9" fontFamily="Open Sans, sans-serif" fontWeight="600" fill="#fff" textAnchor="middle">a</text>
    ) : (
      <path d="M17 12c-2 1-2 3-1 4l3 .5c1 2-1 3-3 2.500M17.500 18v5M13 14l1.500 2M21.500 14v4M13 20l2-1" stroke="#6e6c5e" strokeWidth=".8" fill="none" />
    )}
  </svg>
);
const CloudIcon = () => (
  <svg width="17" height="16" viewBox="0 0 17 16"><path d="M3.500 11.500C0 11 .5 7 3.500 7 4.500 3 9.500 2 11 6c3 .3 4 2 3.500 5.500z" fill="#b9bbbe" /><circle cx="11.500" cy="10.500" r="4.500" fill="#f6df12" /><path d="M11.500 8v3M11.500 12v1.200" stroke="#222" strokeWidth="1.200" /></svg>
);
const MeetIcon = () => (
  <svg width="12" height="16" viewBox="0 0 12 16" {...line}><path d="M1.500 5h6v6h-6zM7.500 7.300 10.500 5.500v5l-3-1.800M2.500 2.500c2-1.500 5-1.500 7 0M2.500 13.500c2 1.500 5 1.500 7 0" /></svg>
);
const NetworkIcon = () => (
  <svg width="16" height="14" viewBox="0 0 16 14" {...line} strokeLinecap="butt"><path d="M5 2.500h10v7.500H4V6M7 13h6M10 10v3M1 1h4v4H1zM3 5v8H1.500" /></svg>
);
const NoticeIcon = () => (
  <svg width="26" height="24" viewBox="0 0 26 24"><path d="M1 1h15v12h-9l-3 3v-3H1z" fill="#fff" /><path d="M3.500 4.500h10M3.500 7h10M3.500 9.500h7" stroke="#383d46" /><circle cx="16" cy="15.500" r="7.500" fill="#34373d" stroke="#8e9196" /><text x="16" y="19.500" fontSize="11" fontFamily="Open Sans, sans-serif" fontWeight="600" fill="#fff" textAnchor="middle">21</text></svg>
);

const bookmarks = [
  { label: "Dashboard", icon: <SimplyIcon />, w: 86 },
  { label: "Traductor", icon: <TranslateIcon />, w: 80 },
  { label: "Panier", icon: <PanierIcon />, w: 63 },
  { label: "Checkout - Jennifer...", icon: <LoopIcon />, w: 140 },
  { label: "Checkout - UnHide", icon: <LoopIcon />, w: 127 },
  { label: "Pet Subscription Bo...", icon: <PawIcon />, w: 141 },
  { label: "Verify Codes — Sim...", icon: <SimplyIcon />, w: 141 },
  { label: "Checkout - Rock Ro...", icon: <RockIcon />, w: 140 },
  { label: "Menu and Plans | W...", icon: <WoopIcon />, w: 141 },
  { label: "Happy Socks", icon: <HappyIcon />, w: 96 },
  { label: "Checkout - Eastland", icon: <FileIcon />, w: 130 },
];
const apps = [
  { name: "Aria", icon: <AriaIcon /> },
  { name: "Messenger", icon: <MessengerIcon /> },
  { name: "WhatsApp", icon: <WhatsappIcon /> },
  { name: "Telegram", icon: <TelegramIcon /> },
  { name: "Player", icon: <PlayerIcon /> },
];
const tools = [
  { name: "Edit", icon: <NoteIcon /> },
  { name: "Snapshot", icon: <Camera size={15} strokeWidth={1.6} /> },
  { name: "Ad blocker", icon: <ShieldIcon />, on: true },
  { name: "My Flow", icon: <FlowIcon /> },
  { name: "Add bookmark", icon: <Heart size={16} strokeWidth={1.7} /> },
  { name: "Downloads", icon: <Download size={14} strokeWidth={2} /> },
  { name: "Easy setup", icon: <TuneIcon /> },
  { name: "Profile", icon: <PersonIcon /> },
];
const features = [
  { icon: <PriceIcon />, lines: ["Lowest Price", "Guaranteed"] },
  { icon: <RefundIcon />, lines: ["Money Back", "Guarantee"] },
  { icon: <DoctorIcon />, lines: ["U.S. Licensed", "Doctors"] },
];
const tasks = [
  { name: "Start", icon: <WindowsLogo /> },
  { name: "Launcher", icon: <ArrowApp /> },
  { name: "Edge", icon: <EdgeIcon />, open: true },
  { name: "Copilot", icon: <CopilotIcon /> },
  { name: "Explorer", icon: <FolderIcon /> },
  { name: "Store", icon: <StoreIcon /> },
  { name: "Outlook", icon: <OutlookIcon /> },
  { name: "Opera", icon: <OperaO size={23} />, open: true, active: true },
  { name: "Chrome", icon: <ChromeIcon badge="photo" />, open: true },
  { name: "Chrome profile", icon: <ChromeIcon badge="a" />, open: true },
];

export default function App() {
  return (
    <Desktop>
      <GlobalStyle />
      <Browser>
        <Sidebar>
          <SideButton aria-label="Opera menu"><OperaO size={17} /></SideButton>
          <SideButton $home aria-label="Home"><HomeIcon /></SideButton>
          <SideButton aria-label="Pinboards"><Star size={17} strokeWidth={1.6} /></SideButton>
          <AppList>
            {apps.map((a) => <AppButton key={a.name} aria-label={a.name}>{a.icon}</AppButton>)}
          </AppList>
          <SideFooter>
            <FooterButton aria-label="Favourites"><Heart size={19} strokeWidth={1.5} /></FooterButton>
            <FooterButton aria-label="History"><HistoryIcon /></FooterButton>
            <FooterButton aria-label="More"><Ellipsis size={18} strokeWidth={2.5} /></FooterButton>
          </SideFooter>
        </Sidebar>

        <Main>
          <TabBar>
            <TabGroup>
              <Marker />
              <Tab><SimplyIcon /><TabTitle>Verify Codes — SimplyCodes</TabTitle></Tab>
              <Tab $active><LockBadge /><TabTitle>Congratulations! You Qualify</TabTitle></Tab>
            </TabGroup>
            <NewTab aria-label="New tab"><Plus size={11} strokeWidth={3} /></NewTab>
            <WindowControls>
              <WindowButton aria-label="Search tabs"><Search size={16} strokeWidth={1.6} /></WindowButton>
              <WindowButton aria-label="Minimize"><svg width="12" height="12" viewBox="0 0 12 12" {...line}><path d="M.5 11h11" /></svg></WindowButton>
              <WindowButton aria-label="Restore"><RestoreIcon /></WindowButton>
              <WindowButton aria-label="Close"><X size={18} strokeWidth={1.6} /></WindowButton>
            </WindowControls>
          </TabBar>

          <AddressRow>
            <Panel $grow>
              <NavButton $faded aria-label="Back"><ChevronLeft size={15} strokeWidth={1.8} /></NavButton>
              <NavButton $faded aria-label="Forward"><ChevronRight size={15} strokeWidth={1.8} /></NavButton>
              <NavButton aria-label="Reload"><RotateCw size={13} strokeWidth={2.2} /></NavButton>
              <NavButton aria-label="Site information"><Padlock /></NavButton>
              <UrlField aria-label="Address" defaultValue="intake.fridayplans.com/fast-track/qualified/" />
              {tools.map((t) => <ToolButton key={t.name} $on={t.on} aria-label={t.name}>{t.icon}</ToolButton>)}
            </Panel>
            <Panel>
              <ExtButton aria-label="Extension"><ExtA /></ExtButton>
              <ExtButton aria-label="Extensions"><Box size={14} strokeWidth={1.8} /></ExtButton>
              <ExtMarker />
            </Panel>
          </AddressRow>

          <Bookmarks>
            {bookmarks.map((b, i) => (
              <Bookmark key={i} $w={b.w} href="#">{b.icon}{b.label}</Bookmark>
            ))}
            <More aria-label="More bookmarks"><ChevronsRight size={14} strokeWidth={1.8} /></More>
          </Bookmarks>

          <Viewport>
            <Page>
              <Hero>
                <span />
                <Rooster />
                <Phone href="tel:8559625303">Call us: (855) 962-5303</Phone>
              </Hero>
              <Banner>
                <Popper />
                <BannerTitle>Fantastic News: You’re Eligible!</BannerTitle>
                <Popper flip />
              </Banner>
              <Headline>Great News! $10 Discount<br />Has Been Applied!</Headline>
              <Stack>
                <Alert>
                  <Hourglass />
                  <div>
                    <AlertTitle>Limited In-State Doctor Slots Today!</AlertTitle>
                    <AlertText>Your 40-minute window for a guaranteed<br />slot is closing fast. Confirm immediately!</AlertText>
                  </div>
                </Alert>
                <Required>
                  <svg width="20" height="16" viewBox="0 0 20 16"><path d="m2 8 5.500 5.500L18 2.500" fill="none" stroke="#fff" strokeWidth="3.200" strokeLinecap="round" /></svg>
                  No video or phone call required!
                </Required>
                <PayNote>
                  <Seal />
                  <PayText><PayStrong>You pay $0 today.</PayStrong> You will only be<br />charged if your prescription is approved.</PayText>
                </PayNote>
                <Features>
                  {features.map((f) => (
                    <Feature key={f.lines[0]}>
                      <FeatureTile>{f.icon}</FeatureTile>
                      <span>{f.lines[0]}<br />{f.lines[1]}</span>
                    </Feature>
                  ))}
                </Features>
              </Stack>
            </Page>
            <ScrollTrack>
              <ChevronUp size={12} />
              <ScrollThumb />
              <ChevronDown size={12} strokeWidth={3} />
            </ScrollTrack>
          </Viewport>
        </Main>
      </Browser>

      <Taskbar>
        {tasks.map((t) => (
          <TaskButton key={t.name} $open={t.open} $active={t.active} aria-label={t.name}>{t.icon}</TaskButton>
        ))}
        <Tray>
          <TrayButton aria-label="Show hidden icons"><ChevronUp size={16} strokeWidth={1.8} /></TrayButton>
          <TrayButton aria-label="OneDrive"><CloudIcon /></TrayButton>
          <TrayButton aria-label="Meet Now"><MeetIcon /></TrayButton>
          <TrayButton aria-label="Network"><NetworkIcon /></TrayButton>
          <Language>ESP</Language>
          <Clock>6:56 a. m.<br />26/3/2025</Clock>
          <NoticeButton aria-label="Notifications"><NoticeIcon /></NoticeButton>
        </Tray>
      </Taskbar>
    </Desktop>
  );
}
